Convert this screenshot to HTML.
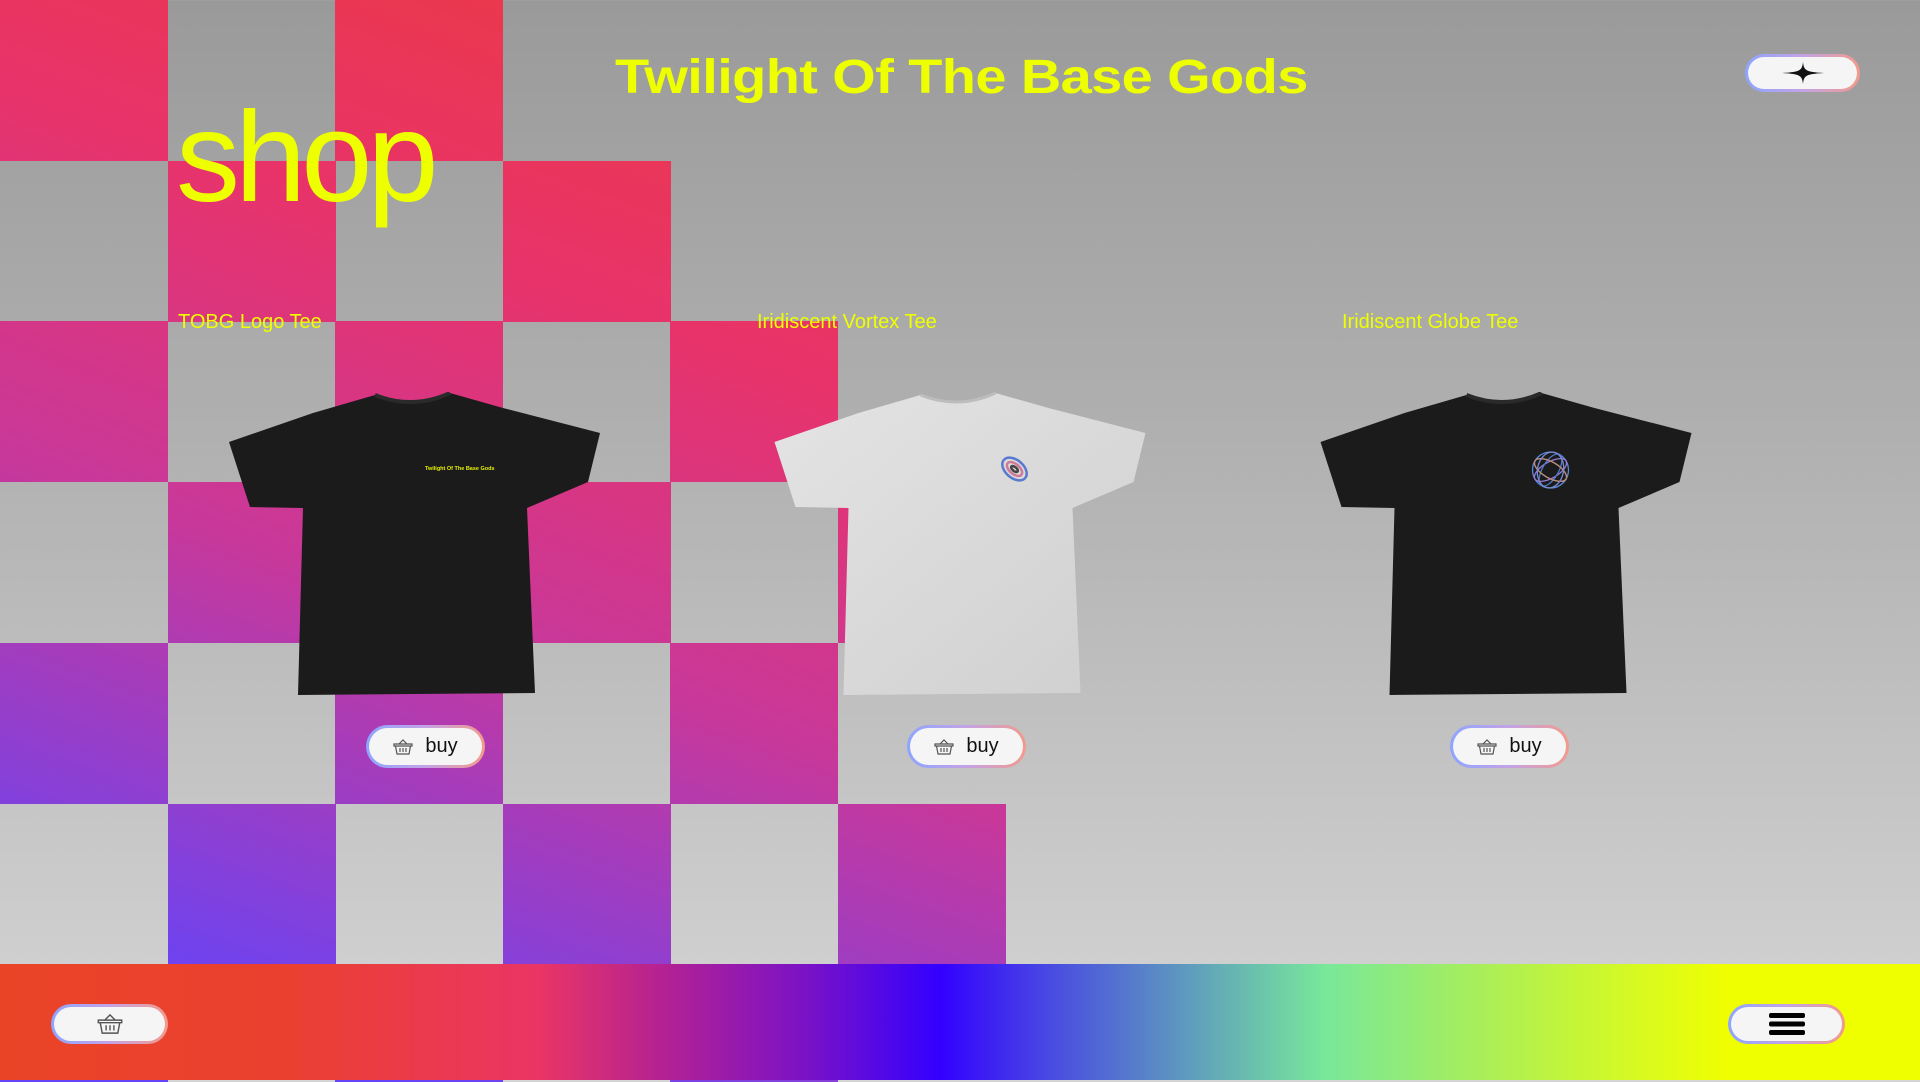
<!DOCTYPE html>
<html><head><meta charset="utf-8">
<style>
*{margin:0;padding:0;box-sizing:border-box}
html,body{width:1920px;height:1082px;overflow:hidden}
body{position:relative;background:linear-gradient(180deg,#9a9a9a 0%,#b0b0b0 40%,#d6d6d6 100%);font-family:"Liberation Sans",sans-serif}
.c{position:absolute;width:168px;height:161px;background:linear-gradient(200deg,#ec3b3a 0%,#e8336a 30%,#c8389a 55%,#6544f8 88%);background-attachment:fixed;background-size:1006px 1124px;background-repeat:no-repeat;background-position:0 0}
.title{position:absolute;left:0;width:1920px;top:50px;text-align:center;color:#eeff00;font-weight:bold;font-size:48px;letter-spacing:-0.5px}
.title span{display:inline-block;transform:scaleX(1.165);margin-left:2px}
.shop{position:absolute;left:176px;top:94px;font-size:128px;color:#eeff00;letter-spacing:-5px;line-height:1}
.lbl{position:absolute;top:311px;color:#eeff00;font-size:20px}
.pill{position:absolute;border-radius:30px;padding:3px;background:linear-gradient(90deg,#8ea4ff,#c3a3e6,#f29a8c)}
.pill>div{width:100%;height:100%;border-radius:27px;background:#f5f5f5;display:flex;align-items:center;justify-content:center}
.buy{width:119px;height:43px;top:725px}
.buy span{font-size:20px;color:#111;margin-left:12px}
.foot{position:absolute;left:0;top:964px;width:1920px;height:116px;background:linear-gradient(90deg,#ea4427 0%,#ea4030 15%,#ea3565 28%,#b8238f 34%,#7a12c6 42%,#3300ff 49%,#4a4ee0 55%,#62a8b8 63%,#78e89a 69%,#a8ee5a 77%,#d0f82a 84%,#f0ff00 90%,#f0ff00 100%)}
</style></head><body>
<div class="c" style="left:0;top:0"></div>
<div class="c" style="left:335px;top:0"></div>
<div class="c" style="left:168px;top:161px"></div>
<div class="c" style="left:503px;top:161px"></div>
<div class="c" style="left:0;top:321px"></div>
<div class="c" style="left:335px;top:321px"></div>
<div class="c" style="left:670px;top:321px"></div>
<div class="c" style="left:168px;top:482px"></div>
<div class="c" style="left:503px;top:482px"></div>
<div class="c" style="left:838px;top:482px"></div>
<div class="c" style="left:0;top:643px"></div>
<div class="c" style="left:335px;top:643px"></div>
<div class="c" style="left:670px;top:643px"></div>
<div class="c" style="left:168px;top:804px"></div>
<div class="c" style="left:503px;top:804px"></div>
<div class="c" style="left:838px;top:804px"></div>
<div class="c" style="left:0;top:964px"></div>
<div class="c" style="left:335px;top:964px"></div>
<div class="c" style="left:670px;top:964px"></div>

<div class="title"><span>Twilight Of The Base Gods</span></div>
<div class="shop">shop</div>

<div class="pill" style="left:1745px;top:54px;width:115px;height:38px"><div>
<svg width="44" height="24" viewBox="0 0 44 24"><path d="M22 1 C23 9 24 11 43 12 C24 13 23 15 22 23 C21 15 20 13 1 12 C20 11 21 9 22 1Z" fill="#111"/></svg>
</div></div>

<div class="lbl" style="left:178px">TOBG Logo Tee</div>
<div class="lbl" style="left:757px">Iridiscent Vortex Tee</div>
<div class="lbl" style="left:1342px">Iridiscent Globe Tee</div>

<svg style="position:absolute;left:229px;top:392px" width="371" height="305" viewBox="0 0 371 305">
<path d="M146,3 Q184,16 221,1 L274,16 L371,41 L359,90 L298,116 L306,301 L69,303 L74,116 L21,115 L0,50 L84,21 Z" fill="#1b1b1b"/>
<path d="M146,3 Q184,18 221,1" stroke="#2a2a2a" stroke-width="4" fill="none"/>
<text x="196" y="78" font-family="Liberation Sans" font-weight="bold" font-size="5.5" fill="#e6f000">Twilight Of The Base Gods</text>
</svg>

<svg style="position:absolute;left:774px;top:392px" width="372" height="305" viewBox="0 0 371 305">
<defs><linearGradient id="wg" x1="0" y1="0" x2="1" y2="1"><stop offset="0" stop-color="#e4e4e4"/><stop offset="1" stop-color="#cfcfcf"/></linearGradient></defs>
<path d="M146,3 Q184,16 221,1 L274,16 L371,41 L359,90 L298,116 L306,301 L69,303 L74,116 L21,115 L0,50 L84,21 Z" fill="url(#wg)"/>
<path d="M146,3 Q184,18 221,1" stroke="#bdbdbd" stroke-width="3" fill="none"/>
<g transform="translate(240,77)" fill="none" stroke-width="2.5">
<ellipse rx="14" ry="9" transform="rotate(40)" stroke="#5a7ad0"/>
<ellipse rx="9" ry="5" transform="rotate(40)" stroke="#d07a9a"/>
<ellipse rx="4" ry="2" transform="rotate(40)" stroke="#444"/>
</g>
</svg>

<svg style="position:absolute;left:1320px;top:392px" width="372" height="305" viewBox="0 0 371 305">
<path d="M146,3 Q184,16 221,1 L274,16 L371,41 L359,90 L298,116 L306,301 L69,303 L74,116 L21,115 L0,50 L84,21 Z" fill="#1b1b1b"/>
<path d="M146,3 Q184,18 221,1" stroke="#2a2a2a" stroke-width="4" fill="none"/>
<g transform="translate(230,78)" fill="none" stroke-width="1.3">
<circle r="18" stroke="#5a8ad8"/>
<ellipse rx="18" ry="8" transform="rotate(30)" stroke="#6a9ae0"/>
<ellipse rx="18" ry="8" transform="rotate(-30)" stroke="#9a7ad8"/>
<ellipse rx="8" ry="18" transform="rotate(30)" stroke="#4a7ac8"/>
<ellipse rx="8" ry="18" transform="rotate(-60)" stroke="#c08a70"/>
<ellipse rx="13" ry="18" transform="rotate(10)" stroke="#7a8ad0"/>
</g>
</svg>

<div class="pill buy" style="left:366px"><div>
<svg width="20" height="16" viewBox="0 0 20 16" fill="none" stroke="#555" stroke-width="1.2"><path d="M6 5 L10 1 L14 5"/><path d="M1 5 H19 V7 H1Z"/><path d="M2.5 7 L4 15 H16 L17.5 7"/><path d="M7 9v4M10 9v4M13 9v4"/></svg><span>buy</span></div></div>
<div class="pill buy" style="left:907px"><div>
<svg width="20" height="16" viewBox="0 0 20 16" fill="none" stroke="#555" stroke-width="1.2"><path d="M6 5 L10 1 L14 5"/><path d="M1 5 H19 V7 H1Z"/><path d="M2.5 7 L4 15 H16 L17.5 7"/><path d="M7 9v4M10 9v4M13 9v4"/></svg><span>buy</span></div></div>
<div class="pill buy" style="left:1450px"><div>
<svg width="20" height="16" viewBox="0 0 20 16" fill="none" stroke="#555" stroke-width="1.2"><path d="M6 5 L10 1 L14 5"/><path d="M1 5 H19 V7 H1Z"/><path d="M2.5 7 L4 15 H16 L17.5 7"/><path d="M7 9v4M10 9v4M13 9v4"/></svg><span>buy</span></div></div>

<div class="foot"></div>
<div class="pill" style="left:51px;top:1004px;width:117px;height:40px"><div>
<svg width="26" height="22" viewBox="0 0 20 16" fill="none" stroke="#555" stroke-width="1.1"><path d="M6 5 L10 1 L14 5"/><path d="M1 5 H19 V7 H1Z"/><path d="M2.5 7 L4 15 H16 L17.5 7"/><path d="M7 9v4M10 9v4M13 9v4"/></svg></div></div>
<div class="pill" style="left:1728px;top:1004px;width:117px;height:40px"><div>
<svg width="36" height="22" viewBox="0 0 36 22"><rect x="0" y="0" width="36" height="5" rx="2" fill="#000"/><rect x="0" y="8.5" width="36" height="5" rx="2" fill="#000"/><rect x="0" y="17" width="36" height="5" rx="2" fill="#000"/></svg></div></div>
</body></html>
